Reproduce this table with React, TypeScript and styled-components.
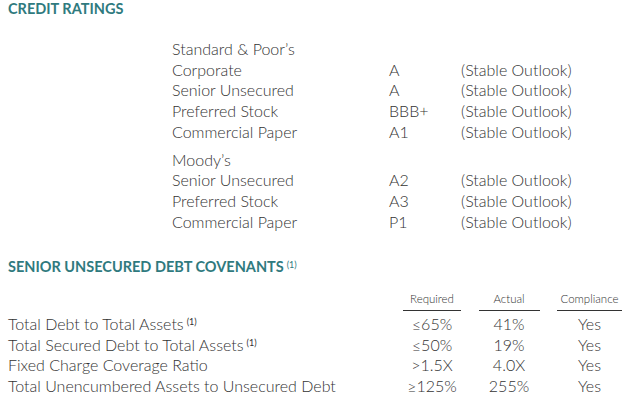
import React from "react";
import styled, { createGlobalStyle } from "styled-components";

const Global = createGlobalStyle`
  html, body { margin: 0; padding: 0; background: #ffffff; }
  body { font-family: "Lato", "Liberation Sans", sans-serif; color: #333333; }
`;

const Page = styled.div`
  width: 635px;
  height: 400px;
  box-sizing: border-box;
  padding: 0 0 0 8px;
  overflow: hidden;
`;

const SectionTitle = styled.h2<{ $mt?: number }>`
  margin: ${(p) => p.$mt ?? 0}px 0 0 0;
  font-family: "Lato", "Liberation Sans", sans-serif;
  font-weight: 700;
  font-size: 14.5px;
  line-height: 18px;
  color: #2f7a7e;
  letter-spacing: 0;
`;

const Sup = styled.sup`
  font-size: 9px;
  font-weight: 400;
  vertical-align: top;
  position: relative;
  top: -2px;
  margin-left: 3px;
`;

const RatingsGrid = styled.div<{ $mt: number }>`
  margin: ${(p) => p.$mt}px 0 0 164px;
  display: grid;
  grid-template-columns: 217px 72px auto;
  font-size: 16px;
  line-height: 20.7px;
  font-weight: 300;
`;

const Cell = styled.div`
  white-space: nowrap;
`;

const Spacer = styled.div`
  grid-column: 1 / -1;
  height: 7px;
`;

const CovGrid = styled.div`
  margin-top: 15.5px;
  width: 614px;
  display: grid;
  grid-template-columns: 1fr 58px 61px 65px;
  column-gap: 17.5px;
  font-size: 16px;
  line-height: 20.7px;
  font-weight: 300;
`;

const HeadCell = styled.div`
  font-size: 11.5px;
  line-height: 14px;
  text-align: center;
  padding-bottom: 4px;
  border-bottom: 1px solid #333333;
  margin-bottom: 3px;
  white-space: nowrap;
`;

const HeadBlank = styled.div``;

const Label = styled.div`
  white-space: nowrap;
`;

const Val = styled.div`
  text-align: center;
  white-space: nowrap;
`;

type Rating = [string, string, string];

const sp: Rating[] = [
  ["Corporate", "A", "(Stable Outlook)"],
  ["Senior Unsecured", "A", "(Stable Outlook)"],
  ["Preferred Stock", "BBB+", "(Stable Outlook)"],
  ["Commercial Paper", "A1", "(Stable Outlook)"],
];

const moodys: Rating[] = [
  ["Senior Unsecured", "A2", "(Stable Outlook)"],
  ["Preferred Stock", "A3", "(Stable Outlook)"],
  ["Commercial Paper", "P1", "(Stable Outlook)"],
];

const covenants: { label: string; note?: boolean; req: string; act: string; ok: string }[] = [
  { label: "Total Debt to Total Assets", note: true, req: "\u226465%", act: "41%", ok: "Yes" },
  { label: "Total Secured Debt to Total Assets", note: true, req: "\u226450%", act: "19%", ok: "Yes" },
  { label: "Fixed Charge Coverage Ratio", req: ">1.5X", act: "4.0X", ok: "Yes" },
  { label: "Total Unencumbered Assets to Unsecured Debt", req: "\u2265125%", act: "255%", ok: "Yes" },
];

function Group({ name, rows }: { name: string; rows: Rating[] }) {
  return (
    <>
      <Cell>{name}</Cell>
      <Cell />
      <Cell />
      {rows.map((r) => (
        <React.Fragment key={name + r[0]}>
          <Cell>{r[0]}</Cell>
          <Cell>{r[1]}</Cell>
          <Cell>{r[2]}</Cell>
        </React.Fragment>
      ))}
    </>
  );
}

export default function App() {
  return (
    <Page>
      <Global />
      <SectionTitle>CREDIT RATINGS</SectionTitle>
      <RatingsGrid $mt={21}>
        <Group name={"Standard & Poor\u2019s"} rows={sp} />
        <Spacer />
        <Group name={"Moody\u2019s"} rows={moodys} />
      </RatingsGrid>
      <SectionTitle $mt={26}>
        SENIOR UNSECURED DEBT COVENANTS<Sup>(1)</Sup>
      </SectionTitle>
      <CovGrid>
        <HeadBlank />
        <HeadCell>Required</HeadCell>
        <HeadCell>Actual</HeadCell>
        <HeadCell>Compliance</HeadCell>
        {covenants.map((c) => (
          <React.Fragment key={c.label}>
            <Label>
              {c.label}
              {c.note && <Sup>(1)</Sup>}
            </Label>
            <Val>{c.req}</Val>
            <Val>{c.act}</Val>
            <Val>{c.ok}</Val>
          </React.Fragment>
        ))}
      </CovGrid>
    </Page>
  );
}
